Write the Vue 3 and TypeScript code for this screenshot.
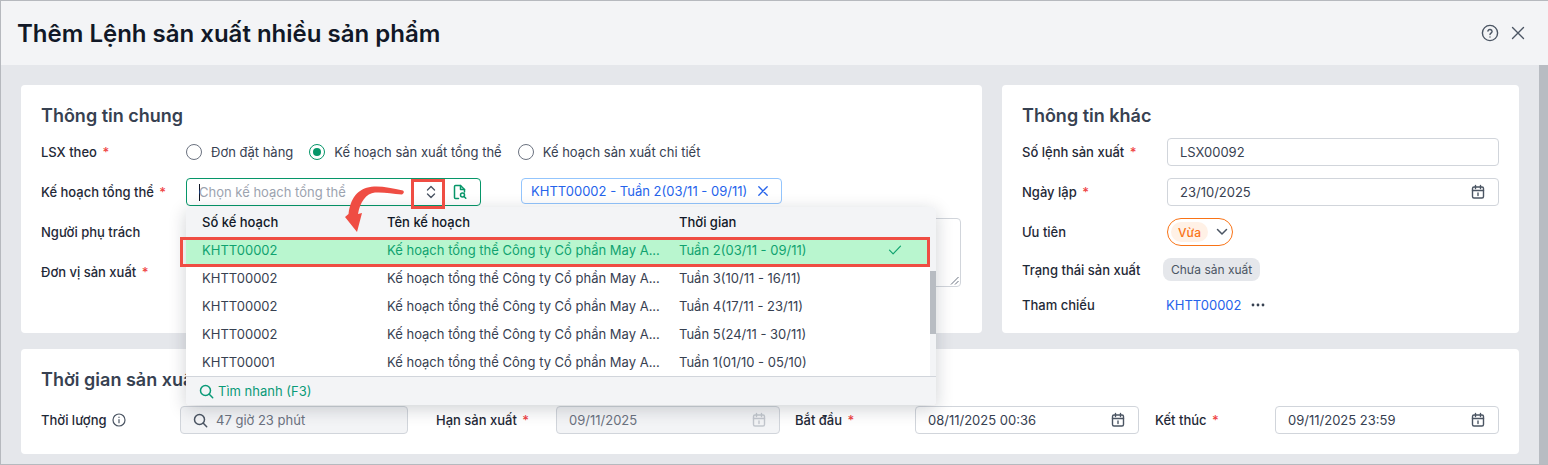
<script setup lang="ts">
interface PlanRow {
  code: string
  name: string
  period: string
  selected?: boolean
}

const rows: PlanRow[] = [
  { code: 'KHTT00002', name: 'Kế hoạch tổng thể Công ty Cổ phần May A...', period: 'Tuần 2(03/11 - 09/11)', selected: true },
  { code: 'KHTT00002', name: 'Kế hoạch tổng thể Công ty Cổ phần May A...', period: 'Tuần 3(10/11 - 16/11)' },
  { code: 'KHTT00002', name: 'Kế hoạch tổng thể Công ty Cổ phần May A...', period: 'Tuần 4(17/11 - 23/11)' },
  { code: 'KHTT00002', name: 'Kế hoạch tổng thể Công ty Cổ phần May A...', period: 'Tuần 5(24/11 - 30/11)' },
  { code: 'KHTT00001', name: 'Kế hoạch tổng thể Công ty Cổ phần May A...', period: 'Tuần 1(01/10 - 05/10)' },
]
</script>

<template>
  <div class="shell">
    <header class="top">
      <h1>Thêm Lệnh sản xuất nhiều sản phẩm</h1>
      <div class="top-actions">
        <svg width="18" height="18" viewBox="0 0 18 18" fill="none" stroke="#4b5563" stroke-width="1.4" stroke-linecap="round" stroke-linejoin="round"><circle cx="9" cy="9" r="7.6" /><path d="M6.9 7a2.15 2.15 0 0 1 4.2.5c0 1.4-2.1 1.8-2.1 3" /><path d="M9 12.9v.1" /></svg>
        <svg width="14" height="14" viewBox="0 0 14 14" fill="none" stroke="#4b5563" stroke-width="1.4" stroke-linecap="round"><path d="M1.5 1.5l11 11M12.5 1.5l-11 11" /></svg>
      </div>
    </header>

    <div class="viewport">
      <main class="content">
        <section class="card general">
          <h2>Thông tin chung</h2>
          <div class="general-grid">
            <div class="label">LSX theo <i>*</i></div>
            <div class="radios">
              <span class="radio"><b class="dot"></b>Đơn đặt hàng</span>
              <span class="radio"><b class="dot on"></b>Kế hoạch sản xuất tổng thể</span>
              <span class="radio"><b class="dot"></b>Kế hoạch sản xuất chi tiết</span>
            </div>

            <div class="label">Kế hoạch tổng thể <i>*</i></div>
            <div class="combo-wrap">
              <div class="combo">
                <span class="caret"></span>
                <span class="placeholder">Chọn kế hoạch tổng thể</span>
                <svg class="updown" width="10" height="14" viewBox="0 0 10 14" fill="none" stroke="#4b5563" stroke-width="1.4" stroke-linecap="round" stroke-linejoin="round"><path d="M1.5 5L5 1.5 8.5 5M1.5 9L5 12.5 8.5 9" /></svg>
                <svg class="docsearch" width="16" height="16" viewBox="0 0 16 16" fill="none" stroke="#069669" stroke-width="1.5" stroke-linecap="round" stroke-linejoin="round"><path d="M6.5 14.5H3.5a1 1 0 0 1-1-1v-11a1 1 0 0 1 1-1h5l4 4v2.500" /><path d="M8.500 1.500v4h4" /><circle cx="10.500" cy="11" r="2" /><path d="M12 12.500l1.800 1.800" /></svg>
              </div>

              <div class="dropdown">
                <div class="drop-head">
                  <span class="c1">Số kế hoạch</span>
                  <span class="c2">Tên kế hoạch</span>
                  <span class="c3">Thời gian</span>
                </div>
                <div class="drop-body">
                  <div class="drop-rows">
                    <div v-for="(row, idx) in rows" :key="idx" class="drop-row" :class="{ selected: row.selected }">
                      <span class="c1">{{ row.code }}</span>
                      <span class="c2">{{ row.name }}</span>
                      <span class="c3">{{ row.period }}</span>
                      <svg v-if="row.selected" class="tick" width="14" height="10" viewBox="0 0 14 10" fill="none" stroke="#10a36f" stroke-width="1.2" stroke-linecap="round" stroke-linejoin="round"><path d="M1.500 5.200l3.600 3.600 7.400-7.600" /></svg>
                    </div>
                  </div>
                  <div class="drop-track"><div class="drop-thumb"></div></div>
                </div>
                <div class="drop-foot">
                  <svg width="15" height="15" viewBox="0 0 15 15" fill="none" stroke="#0a9a78" stroke-width="1.500" stroke-linecap="round"><circle cx="6.500" cy="6.500" r="5" /><path d="M10.300 10.300l3.400 3.400" /></svg>
                  <span>Tìm nhanh (F3)</span>
                </div>
              </div>
            </div>
            <div class="chip-cell">
              <span class="chip">KHTT00002 - Tuần 2(03/11 - 09/11)
                <svg width="10" height="10" viewBox="0 0 10 10" fill="none" stroke="#2563eb" stroke-width="1.300" stroke-linecap="round"><path d="M.8.8l8.400 8.400M9.200.8L.8 9.200" /></svg>
              </span>
            </div>

            <div class="label">Người phụ trách</div>
            <div class="input"></div>
            <div class="note"><svg class="grip" width="9" height="9" viewBox="0 0 9 9" stroke="#6b7280" stroke-width="1" fill="none"><path d="M1 8.500L8.500 1M5 8.500L8.500 5" /></svg></div>

            <div class="label">Đơn vị sản xuất <i>*</i></div>
            <div class="input"></div>
          </div>
        </section>

        <section class="card other">
          <h2>Thông tin khác</h2>
          <div class="other-grid">
            <div class="label">Số lệnh sản xuất <i>*</i></div>
            <div class="input text">LSX00092</div>

            <div class="label">Ngày lập <i>*</i></div>
            <div class="input text date">23/10/2025
              <svg width="16" height="16" viewBox="0 0 16 16" fill="none" stroke="#4b5563" stroke-width="1.400" stroke-linecap="round" stroke-linejoin="round"><rect x="2.500" y="3" width="11" height="11" rx="1.500" /><path d="M5.500 1.500v3M10.500 1.500v3M2.500 6.500h11M8 9v2.500" /></svg>
            </div>

            <div class="label">Ưu tiên</div>
            <div>
              <div class="priority">
                <span class="priority-tag">Vừa</span>
                <svg width="12" height="8" viewBox="0 0 12 8" fill="none" stroke="#4b5563" stroke-width="1.500" stroke-linecap="round" stroke-linejoin="round"><path d="M1.500 1.500L6 6l4.500-4.500" /></svg>
              </div>
            </div>

            <div class="label status-row">Trạng thái sản xuất</div>
            <div class="status-row"><span class="status">Chưa sản xuất</span></div>

            <div class="label ref-row">Tham chiếu</div>
            <div class="ref ref-row">
              <span class="link">KHTT00002</span>
              <svg width="14" height="4" viewBox="0 0 14 4" fill="#374151"><circle cx="2" cy="2" r="1.400" /><circle cx="7" cy="2" r="1.400" /><circle cx="12" cy="2" r="1.400" /></svg>
            </div>
          </div>
        </section>

        <section class="card timing">
          <h2>Thời gian sản xuất</h2>
          <div class="timing-row">
            <div class="label t-l1">Thời lượng
              <svg width="14" height="14" viewBox="0 0 14 14" fill="none" stroke="#4b5563" stroke-width="1.200" stroke-linecap="round"><circle cx="7" cy="7" r="6" /><path d="M7 6.500v3.200M7 4.200v.2" /></svg>
            </div>
            <div class="input duration">
              <svg width="15" height="15" viewBox="0 0 15 15" fill="none" stroke="#4b5563" stroke-width="1.500" stroke-linecap="round"><circle cx="6.500" cy="6.500" r="5" /><path d="M10.300 10.300l3.400 3.400" /></svg>
              <span>47 giờ 23 phút</span>
            </div>
            <div class="label t-l2">Hạn sản xuất <i>*</i></div>
            <div class="input date disabled t-in">09/11/2025
              <svg width="16" height="16" viewBox="0 0 16 16" fill="none" stroke="#c3c7ce" stroke-width="1.400" stroke-linecap="round" stroke-linejoin="round"><rect x="2.500" y="3" width="11" height="11" rx="1.500" /><path d="M5.500 1.500v3M10.500 1.500v3M2.500 6.500h11M8 9v2.500" /></svg>
            </div>
            <div class="label t-l3">Bắt đầu <i>*</i></div>
            <div class="input text date t-in">08/11/2025 00:36
              <svg width="16" height="16" viewBox="0 0 16 16" fill="none" stroke="#4b5563" stroke-width="1.400" stroke-linecap="round" stroke-linejoin="round"><rect x="2.500" y="3" width="11" height="11" rx="1.500" /><path d="M5.500 1.500v3M10.500 1.500v3M2.500 6.500h11M8 9v2.500" /></svg>
            </div>
            <div class="label t-l4">Kết thúc <i>*</i></div>
            <div class="input text date t-in">09/11/2025 23:59
              <svg width="16" height="16" viewBox="0 0 16 16" fill="none" stroke="#4b5563" stroke-width="1.400" stroke-linecap="round" stroke-linejoin="round"><rect x="2.500" y="3" width="11" height="11" rx="1.500" /><path d="M5.500 1.500v3M10.500 1.500v3M2.500 6.500h11M8 9v2.500" /></svg>
            </div>
          </div>
        </section>
      </main>
      <div class="page-scroll"></div>
    </div>

    <!-- Callouts drawn over the screenshot -->
    <div class="mark mark-btn"></div>
    <div class="mark mark-row"></div>
    <svg class="callout" width="80" height="60" viewBox="0 0 80 60">
      <path fill="#ef4d43" d="M71 12.500C60 10 50 8 42 8.500 28 9.500 19 17 16.500 36L13 39 25 54 30 35l-4 1C28 24 34 15.500 43 14.500 52 14 60 15.500 70 16.500 72 15.500 72.500 13.500 71 12.500Z" />
    </svg>
  </div>
</template>

<style>
html, body { margin: 0; padding: 0; overflow: hidden; }
</style>

<style scoped>
* { box-sizing: border-box; }
.shell {
  position: relative;
  width: 1548px;
  height: 465px;
  display: flex;
  flex-direction: column;
  border: 1px solid #b6b9be;
  border-right: 0;
  background: #e5e7eb;
  font-family: Inter, "Noto Sans", sans-serif;
  font-size: 13px;
  color: #1f2937;
  overflow: hidden;
}
.top {
  height: 64px;
  flex: none;
  display: flex;
  align-items: center;
  justify-content: space-between;
  padding: 0 23px 0 16px;
  background: #f3f4f6;
}
h1 { margin: 0; font-size: 24px; font-weight: 600; color: #111827; }
.top-actions { display: flex; align-items: center; gap: 12px; }
.top-actions svg { display: block; }
.viewport { flex: 1; display: flex; min-height: 0; }
.content {
  flex: 1;
  padding: 20px 20px 0;
  display: grid;
  grid-template-columns: 961px 517px;
  grid-template-rows: 248px 105px;
  column-gap: 20px;
  row-gap: 16px;
}
.page-scroll { width: 9px; flex: none; background: #b8bcc2; }
.card { background: #fff; border-radius: 4px; padding: 20px; }
.timing { grid-column: 1 / 3; padding-top: 20px; }
h2 { margin: 0; font-size: 18px; line-height: 22px; font-weight: 600; color: #374151; }
.label { display: flex; align-items: center; gap: 2px; font-weight: 500; color: #1f2937; white-space: pre; height: 28px; }
.label i { color: #ef4444; font-style: normal; }

.general-grid {
  margin-top: 11px;
  display: grid;
  grid-template-columns: 145px 295px 40px 440px;
  grid-auto-rows: 28px;
  row-gap: 12px;
}
.general-grid > .label { grid-column: 1; }
.general-grid > .input, .general-grid > .combo-wrap { grid-column: 2; }
.radios { grid-column: 2 / 5; display: flex; align-items: center; gap: 16px; }
.radio { display: inline-flex; align-items: center; gap: 9px; color: #374151; }
.dot { width: 16px; height: 16px; border-radius: 50%; border: 1px solid #6b7280; background: #fff; position: relative; }
.dot.on { border-color: #069669; }
.dot.on::after { content: ""; position: absolute; inset: 3px; border-radius: 50%; background: #069669; }

.input {
  height: 28px;
  border: 1px solid #d1d5db;
  border-radius: 4px;
  background: #fff;
  display: flex;
  align-items: center;
  padding: 0 12px;
}
.input.text { color: #374151; }
.input.date { justify-content: space-between; padding-right: 12px; }
.input.disabled { background: #f3f4f6; color: #6b7280; }

.combo-wrap { position: relative; }
.combo {
  height: 28px;
  border: 1px solid #069669;
  border-radius: 4px;
  display: flex;
  align-items: center;
  padding-left: 12px;
  background: #fff;
}
.caret { width: 1px; height: 17px; background: #111827; }
.placeholder { color: #9ca3af; flex: 1; margin-left: -1px; }
.updown { margin-right: 16px; }
.docsearch { margin-right: 12px; }

.dropdown {
  position: absolute;
  z-index: 5;
  left: 0;
  top: 29px;
  width: 750px;
  height: 198px;
  display: flex;
  flex-direction: column;
  background: #fff;
  border-radius: 4px;
  box-shadow: 0 4px 18px rgba(17, 24, 39, .2);
}
.drop-head {
  height: 30px;
  flex: none;
  display: flex;
  align-items: center;
  background: #f3f4f6;
  font-weight: 500;
  color: #111827;
  border-radius: 4px 4px 0 0;
}
.c1 { width: 201px; padding-left: 16px; flex: none; }
.c2 { width: 292px; flex: none; white-space: nowrap; overflow: hidden; }
.c3 { flex: none; }
.drop-body { flex: 1; display: flex; min-height: 0; overflow: hidden; }
.drop-rows { flex: 1; min-width: 0; }
.drop-row {
  position: relative;
  height: 28px;
  display: flex;
  align-items: center;
  padding-bottom: 2px;
  color: #374151;
}
.drop-row.selected { background: #b9f6cf; color: #10a36f; }
.tick { position: absolute; left: 702px; top: 8px; }
.drop-track { width: 6px; flex: none; background: #f3f4f6; padding-top: 34px; }
.drop-thumb { height: 63px; background: #b8bcc2; }
.drop-foot {
  height: 29px;
  flex: none;
  display: flex;
  align-items: center;
  gap: 4px;
  padding-left: 13px;
  background: #f3f4f6;
  border-top: 1px solid #d1d5db;
  border-radius: 0 0 4px 4px;
  color: #0a9a78;
}

.chip-cell { grid-column: 4; }
.chip {
  display: inline-flex;
  align-items: center;
  gap: 11px;
  height: 26px;
  width: 261px;
  padding: 0 11px 0 9px;
  border: 1px solid #93c5fd;
  border-radius: 4px;
  color: #2563eb;
  white-space: nowrap;
}
.note {
  grid-column: 4;
  grid-row: 3 / 5;
  height: 69px;
  border: 1px solid #d1d5db;
  border-radius: 4px;
  position: relative;
}
.grip { position: absolute; right: 1px; bottom: 1px; }

.other-grid {
  margin-top: 11px;
  display: grid;
  grid-template-columns: 145px 332px;
  grid-auto-rows: 28px;
  row-gap: 12px;
}
.priority {
  width: 66px;
  height: 28px;
  border: 1px solid #f97316;
  border-radius: 14px;
  display: flex;
  align-items: center;
  justify-content: space-between;
  padding: 0 4px 0 3px;
}
.priority-tag {
  width: 37px;
  height: 20px;
  border-radius: 10px;
  background: #fff1e6;
  color: #f97316;
  font-size: 12px;
  font-weight: 500;
  display: flex;
  align-items: center;
  justify-content: center;
}
.status-row { height: 24px; }
.status {
  display: inline-flex;
  align-items: center;
  height: 23px;
  margin-left: -4px;
  padding: 0 8px;
  border-radius: 8px;
  background: #e5e7eb;
  color: #4b5563;
  font-size: 12px;
}
.ref-row { height: 20px; margin-top: -3px; }
.ref { display: flex; align-items: center; gap: 10px; margin-left: -1px; }
.link { color: #2563eb; }

.timing-row { display: flex; margin-top: 15px; }
.t-l1 { width: 139px; }
.duration { width: 228px; background: #f3f4f6; gap: 8px; color: #6b7280; }
.t-l2 { width: 120px; margin-left: 28px; }
.t-l3 { width: 120px; margin-left: 15px; }
.t-l4 { width: 120px; margin-left: 16px; }
.t-in { width: 224px; }

.mark { position: absolute; z-index: 8; border: 3px solid #ef4d43; pointer-events: none; }
.mark-btn { left: 410px; top: 178px; width: 34px; height: 30px; }
.mark-row { left: 179px; top: 236px; width: 750px; height: 30px; }
.callout { position: absolute; z-index: 9; left: 331px; top: 177px; pointer-events: none; }
</style>
